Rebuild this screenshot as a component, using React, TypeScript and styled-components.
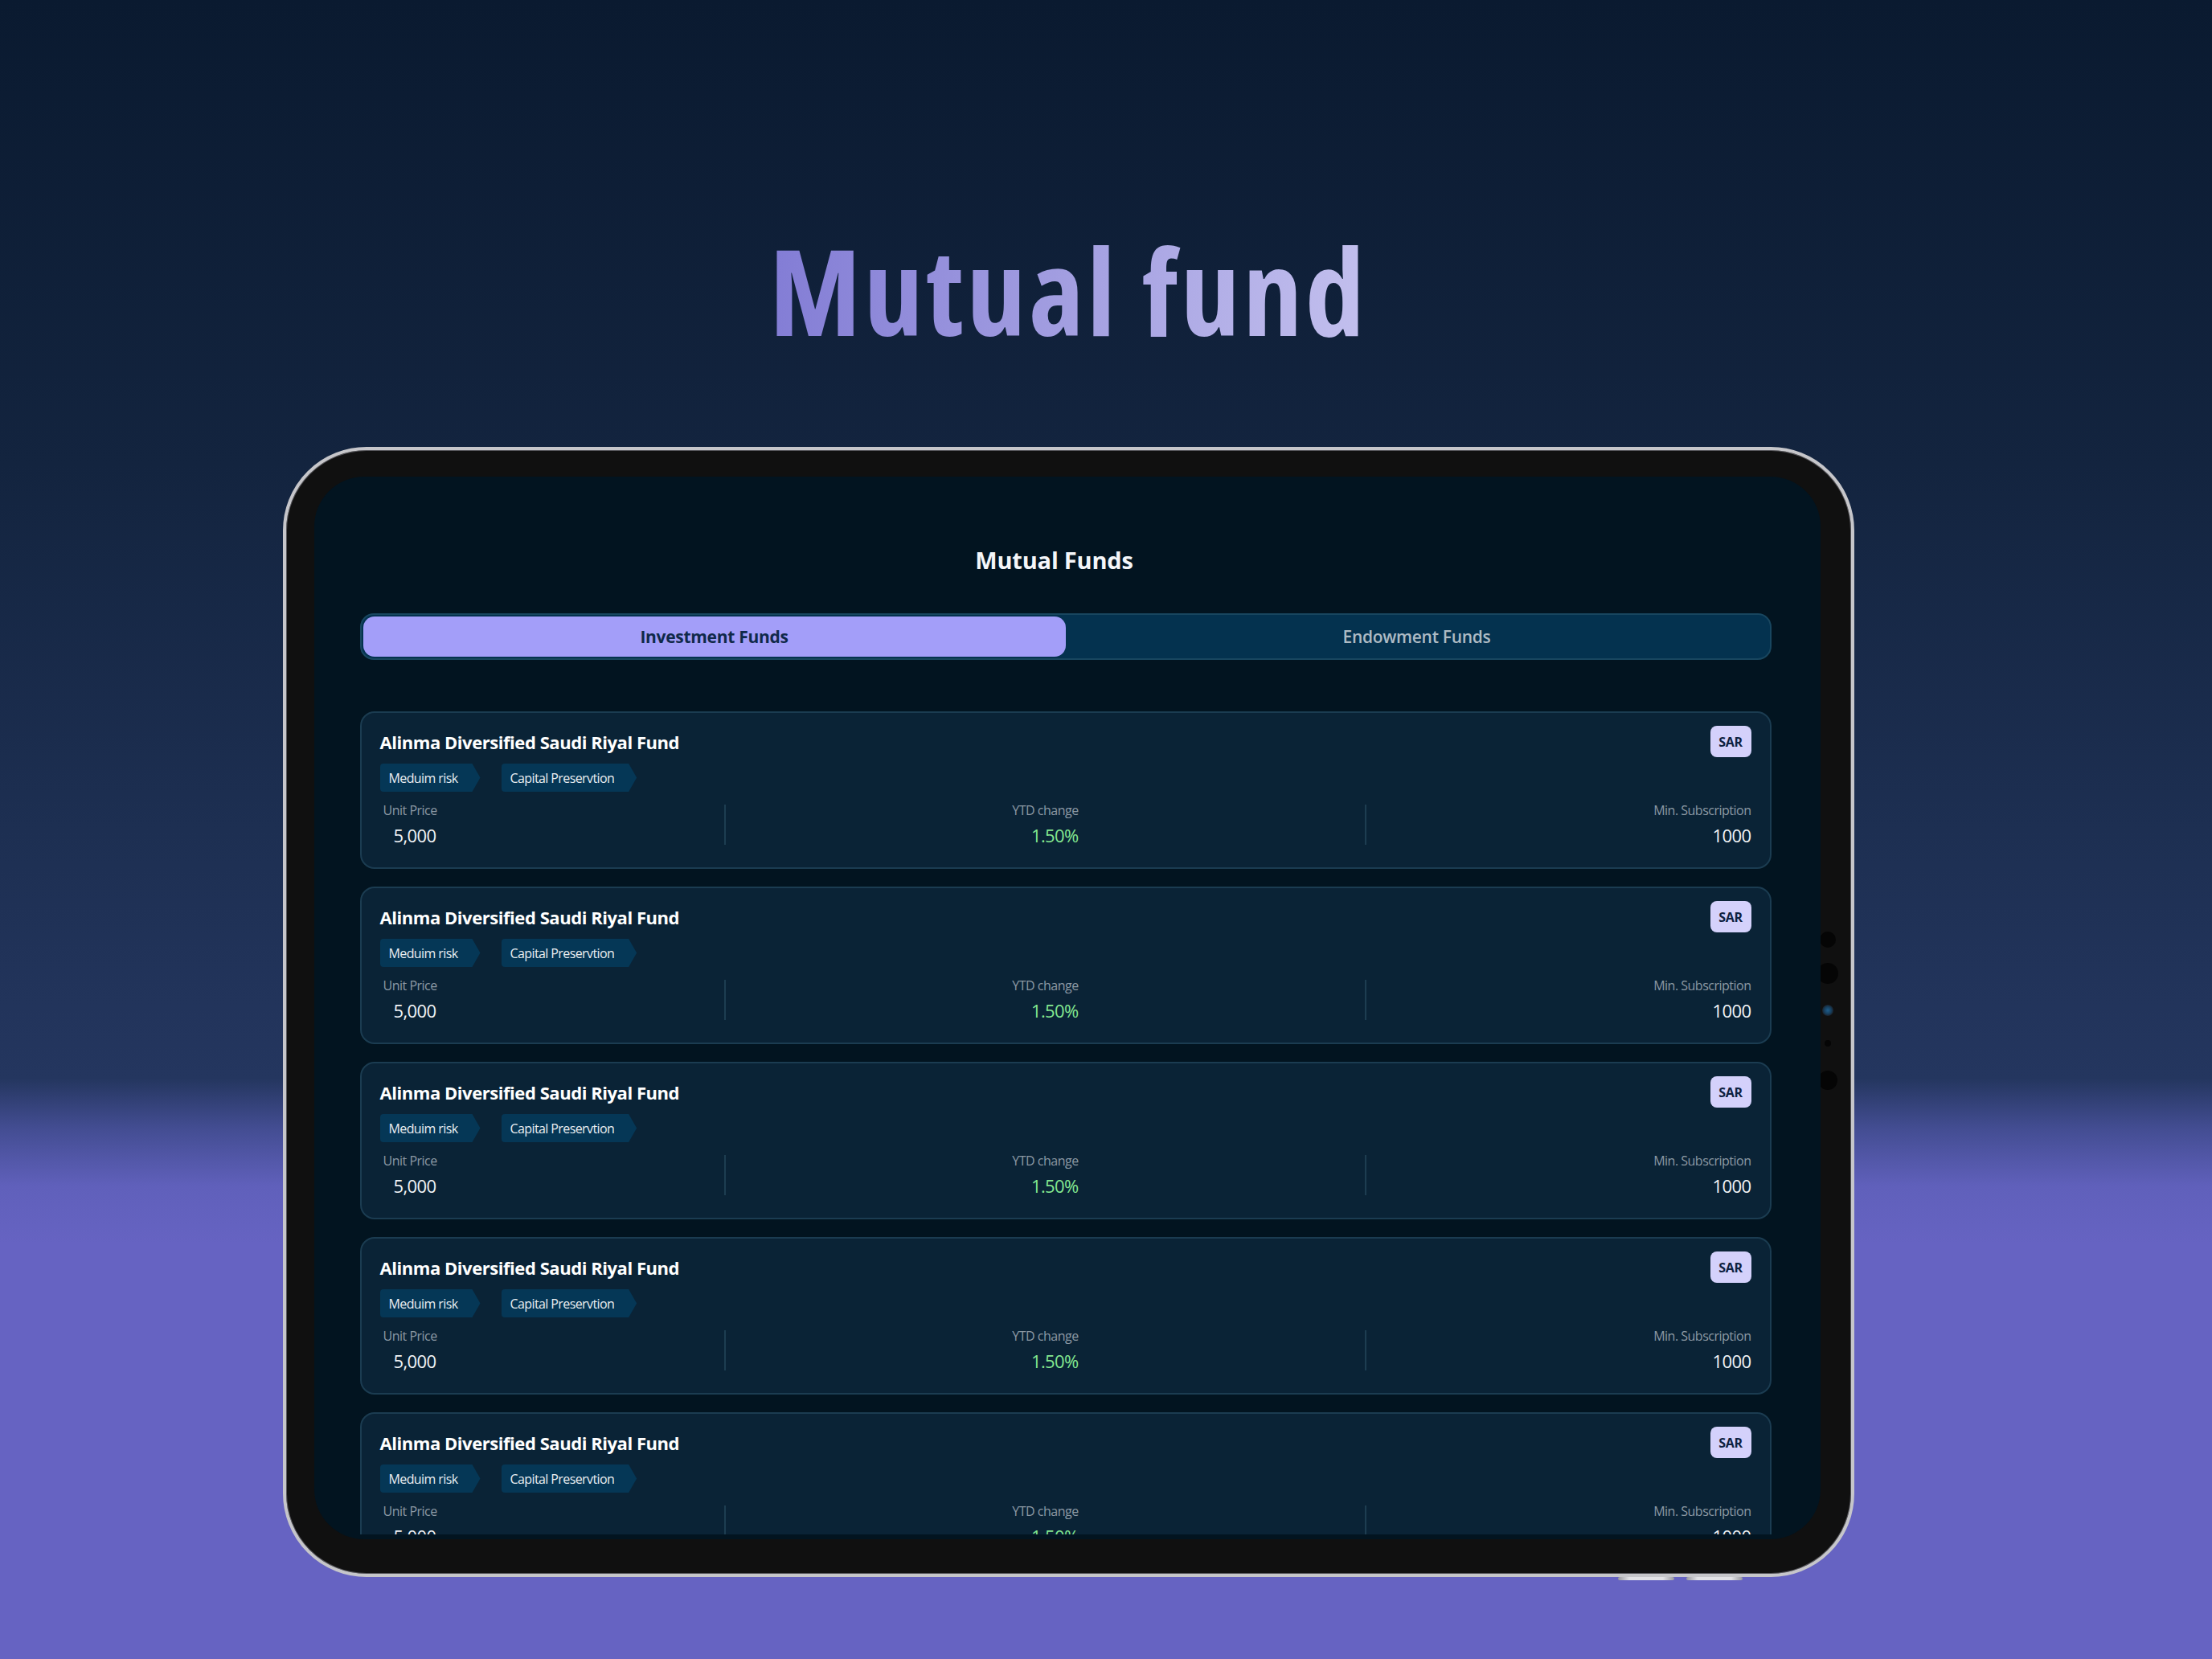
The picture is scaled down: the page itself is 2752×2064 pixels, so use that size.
import React from 'react';
import styled, { createGlobalStyle } from 'styled-components';

const GlobalStyle = createGlobalStyle`
  html, body {
    margin: 0;
    padding: 0;
  }
  body {
    width: 2752px;
    height: 2064px;
    overflow: hidden;
    font-family: "Open Sans", "Noto Sans", sans-serif;
    background: linear-gradient(
      180deg,
      #0a1a30 0%,
      #13243f 28%,
      #1d2f52 50%,
      #24365f 65%,
      #434d92 68%,
      #6060bb 71.5%,
      #6663c2 75%,
      #6663c2 100%
    );
  }
`;

type Fund = {
  name: string;
  currency: string;
  risk: string;
  goal: string;
  unitPrice: string;
  ytd: string;
  minSubscription: string;
};

const funds: Fund[] = Array.from({ length: 5 }, () => ({
  name: 'Alinma Diversified Saudi Riyal Fund',
  currency: 'SAR',
  risk: 'Meduim risk',
  goal: 'Capital Preservtion',
  unitPrice: '5,000',
  ytd: '1.50%',
  minSubscription: '1000',
}));

const Page = styled.main`
  box-sizing: border-box;
  height: 2064px;
  padding: 287px 94px 0 0;
  display: flex;
  flex-direction: column;
  align-items: center;
`;

const Heading = styled.h1`
  margin: 0 0 121px;
  font-size: 148px;
  line-height: 1;
  font-weight: 700;
  font-stretch: 75%;
  letter-spacing: 3.4px;
  background: linear-gradient(95deg, #827cd5 0%, #a6a2e2 55%, #c3c0ee 100%);
  -webkit-background-clip: text;
  background-clip: text;
  color: transparent;
`;

const Tablet = styled.div`
  position: relative;
  box-sizing: border-box;
  width: 1955px;
  height: 1406px;
  padding: 33px 38px 43px 35px;
  border: 4px solid #c6c6ca;
  border-radius: 104px;
  background: #101010;
  box-shadow: inset 0 0 0 1px #55555a;
`;

const SensorStrip = styled.div`
  position: absolute;
  top: 599px;
  right: 16px;
  width: 26px;
  display: flex;
  flex-direction: column;
  align-items: center;
`;

const Sensor = styled.span<{ $size: number; $gap: number }>`
  display: block;
  width: ${(p) => p.$size}px;
  height: ${(p) => p.$size}px;
  margin-top: ${(p) => p.$gap}px;
  border-radius: 50%;
  background: #050505;
`;

const Lens = styled.span`
  display: block;
  width: 14px;
  height: 14px;
  margin-top: 26px;
  border-radius: 50%;
  background: radial-gradient(circle, #1f5f8c 0%, #173d5c 45%, #1a1d22 75%);
`;

const Connector = styled.div`
  position: absolute;
  left: 1657px;
  bottom: -8px;
  display: flex;
  gap: 15px;
`;

const ConnectorPin = styled.span`
  display: block;
  width: 70px;
  height: 4px;
  border-radius: 2px;
  background: linear-gradient(90deg, #9a9aa0, #e2e2e6 20%, #e2e2e6 80%, #9a9aa0);
`;

const Screen = styled.div`
  position: relative;
  z-index: 1;
  box-sizing: border-box;
  height: 100%;
  padding: 85px 61px 6px 57px;
  border-radius: 62px;
  background: #021420;
  display: flex;
  flex-direction: column;
  overflow: hidden;
`;

const ScreenTitle = styled.h2`
  margin: 0;
  padding-right: 28px;
  text-align: center;
  font-size: 29px;
  line-height: 37px;
  font-weight: 700;
  letter-spacing: -0.2px;
  color: #f4f6f9;
`;

const Tabs = styled.div`
  box-sizing: border-box;
  height: 58px;
  margin-top: 48px;
  padding: 2px;
  display: grid;
  grid-template-columns: 1fr 1fr;
  background: #04324f;
  border: 2px solid #18465f;
  border-radius: 17px;
`;

const Tab = styled.div<{ $active?: boolean }>`
  display: flex;
  align-items: center;
  justify-content: center;
  border-radius: 14px;
  font-size: 21px;
  letter-spacing: -0.3px;
  font-weight: ${(p) => (p.$active ? 700 : 600)};
  background: ${(p) => (p.$active ? '#a39ef9' : 'transparent')};
  color: ${(p) => (p.$active ? '#10294a' : '#aebbc4')};
`;

const FundList = styled.div`
  flex: 1;
  min-height: 0;
  margin-top: 64px;
  display: flex;
  flex-direction: column;
  gap: 22px;
  overflow: hidden;
`;

const Card = styled.article`
  flex-shrink: 0;
  box-sizing: border-box;
  height: 196px;
  padding: 16px 23px 0;
  display: flex;
  flex-direction: column;
  background: #0a2336;
  border: 2px solid #1b3c51;
  border-radius: 18px;
`;

const CardHeader = styled.div`
  height: 39px;
  display: flex;
  align-items: center;
  justify-content: space-between;
`;

const FundName = styled.h3`
  margin: 0;
  font-size: 22px;
  line-height: 30px;
  font-weight: 700;
  letter-spacing: -0.45px;
  color: #ffffff;
`;

const Currency = styled.span`
  width: 51px;
  height: 39px;
  display: flex;
  align-items: center;
  justify-content: center;
  border-radius: 8px;
  background: #d4d1fb;
  color: #0f2240;
  font-size: 16px;
  font-weight: 700;
  letter-spacing: -0.3px;
`;

const TagRow = styled.div`
  margin-top: 8px;
  display: flex;
  gap: 26px;
`;

const Tag = styled.span`
  height: 35px;
  padding: 0 28px 0 11px;
  display: flex;
  align-items: center;
  border-radius: 4px;
  background: #053756;
  color: #e9eef2;
  font-size: 16px;
  letter-spacing: -0.6px;
  clip-path: polygon(0 0, calc(100% - 10px) 0, 100% 50%, calc(100% - 10px) 100%, 0 100%);
`;

const Stats = styled.div`
  margin-top: 13px;
  display: flex;
  align-items: center;
  justify-content: space-between;
`;

const Stat = styled.div<{ $align: 'flex-start' | 'flex-end' }>`
  display: flex;
  flex-direction: column;
  align-items: ${(p) => p.$align};
`;

const StatLabel = styled.span<{ $indent?: number }>`
  padding-left: ${(p) => p.$indent ?? 0}px;
  font-size: 16px;
  line-height: 20px;
  letter-spacing: -0.5px;
  color: #8c99a4;
`;

const StatValue = styled.span<{ $indent?: number; $positive?: boolean }>`
  margin-top: 7px;
  padding-left: ${(p) => p.$indent ?? 0}px;
  font-size: 22px;
  line-height: 28px;
  letter-spacing: -0.6px;
  color: ${(p) => (p.$positive ? '#84e890' : '#f1f4f6')};
`;

const Divider = styled.span`
  width: 2px;
  height: 50px;
  background: #1d3d51;
`;

function FundCard({ fund }: { fund: Fund }) {
  return (
    <Card>
      <CardHeader>
        <FundName>{fund.name}</FundName>
        <Currency>{fund.currency}</Currency>
      </CardHeader>
      <TagRow>
        <Tag>{fund.risk}</Tag>
        <Tag>{fund.goal}</Tag>
      </TagRow>
      <Stats>
        <Stat $align="flex-start">
          <StatLabel $indent={4}>Unit Price</StatLabel>
          <StatValue $indent={17}>{fund.unitPrice}</StatValue>
        </Stat>
        <Divider />
        <Stat $align="flex-end">
          <StatLabel>YTD change</StatLabel>
          <StatValue $positive>{fund.ytd}</StatValue>
        </Stat>
        <Divider />
        <Stat $align="flex-end">
          <StatLabel>Min. Subscription</StatLabel>
          <StatValue>{fund.minSubscription}</StatValue>
        </Stat>
      </Stats>
    </Card>
  );
}

export default function App() {
  return (
    <>
      <GlobalStyle />
      <Page>
        <Heading>Mutual fund</Heading>
        <Tablet>
          <Screen>
            <ScreenTitle>Mutual Funds</ScreenTitle>
            <Tabs>
              <Tab $active>Investment Funds</Tab>
              <Tab>Endowment Funds</Tab>
            </Tabs>
            <FundList>
              {funds.map((fund, i) => (
                <FundCard key={i} fund={fund} />
              ))}
            </FundList>
          </Screen>
          <SensorStrip>
            <Sensor $size={20} $gap={0} />
            <Sensor $size={26} $gap={19} />
            <Lens />
            <Sensor $size={8} $gap={30} />
            <Sensor $size={24} $gap={30} />
          </SensorStrip>
          <Connector>
            <ConnectorPin />
            <ConnectorPin />
          </Connector>
        </Tablet>
      </Page>
    </>
  );
}
